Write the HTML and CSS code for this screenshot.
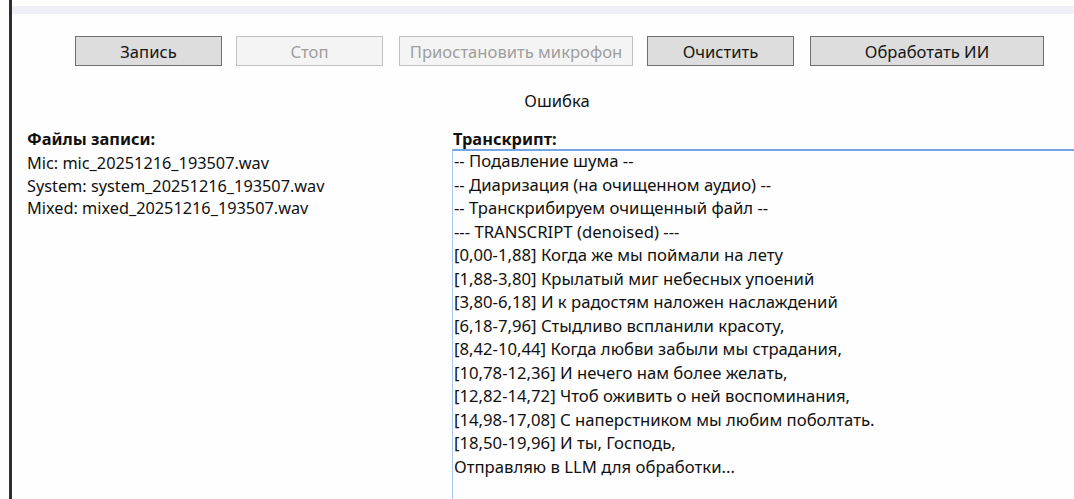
FILE: index.html
```html
<!DOCTYPE html>
<html lang="ru">
<head>
<meta charset="utf-8">
<title>Запись и транскрипция</title>
<link rel="stylesheet" href="styles.css">
</head>
<body>
<div class="window">
  <div class="topstrip"></div>
  <div class="toolbar">
    <button class="btn btn-narrow">Запись</button>
    <button class="btn btn-narrow" disabled>Стоп</button>
    <button class="btn btn-wide" disabled>Приостановить микрофон</button>
    <button class="btn btn-narrow">Очистить</button>
    <button class="btn btn-wide">Обработать ИИ</button>
  </div>
  <div class="status">Ошибка</div>
  <div class="content">
    <div class="files">
      <div class="label">Файлы записи:</div>
      <div class="file-list">
        <div>Mic: mic_20251216_193507.wav</div>
        <div>System: system_20251216_193507.wav</div>
        <div>Mixed: mixed_20251216_193507.wav</div>
      </div>
    </div>
    <div class="transcript">
      <div class="label">Транскрипт:</div>
      <div class="textbox">
        <div class="lines">
          <div>-- Подавление шума --</div>
          <div>-- Диаризация (на очищенном аудио) --</div>
          <div>-- Транскрибируем очищенный файл --</div>
          <div>--- TRANSCRIPT (denoised) ---</div>
          <div>[0,00-1,88] Когда же мы поймали на лету</div>
          <div>[1,88-3,80] Крылатый миг небесных упоений</div>
          <div>[3,80-6,18] И к радостям наложен наслаждений</div>
          <div>[6,18-7,96] Стыдливо вспланили красоту,</div>
          <div>[8,42-10,44] Когда любви забыли мы страдания,</div>
          <div>[10,78-12,36] И нечего нам более желать,</div>
          <div>[12,82-14,72] Чтоб оживить о ней воспоминания,</div>
          <div>[14,98-17,08] С наперстником мы любим поболтать.</div>
          <div>[18,50-19,96] И ты, Господь,</div>
          <div>Отправляю в LLM для обработки...</div>
        </div>
      </div>
    </div>
  </div>
</div>
</body>
</html>
```

FILE: styles.css
```css
html, body {
  margin: 0;
  padding: 0;
  background: #fefefe;
  overflow: hidden;
  height: 499px;
}

.window {
  display: flex;
  flex-direction: column;
  margin-left: 9px;
  border-left: 3px solid #2e2e2e;
  width: 1090px;
  height: 499px;
  overflow: hidden;
  font-family: "Noto Sans", "Open Sans", sans-serif;
  font-size: 16.6px;
  color: #111;
}

.topstrip {
  flex: none;
  margin-top: 6px;
  height: 8px;
  background: #eef0f6;
}

.toolbar {
  flex: none;
  display: flex;
  padding: 22px 0 0 63px;
}

.btn {
  height: 30px;
  margin: 0;
  padding: 0;
  font: inherit;
  font-size: 16.6px;
  color: #151515;
  background: #dddddd;
  border: 1px solid #707070;
}

.btn:disabled {
  color: #9e9e9e;
  background: #f4f4f4;
  border-color: #c2c2c2;
}

.btn-narrow { width: 147px; }
.btn-wide { width: 234px; }
.btn + .btn { margin-left: 14px; }
.btn + .btn-wide { margin-left: 16px; }

.status {
  flex: none;
  text-align: center;
  width: 1090px;
  padding-top: 25px;
  line-height: 20px;
}

.content {
  flex: 1;
  min-height: 0;
  display: flex;
  padding-top: 18px;
}

.files {
  width: 425px;
  padding-left: 15px;
  font-size: 16.3px;
}

.file-list {
  padding-top: 3px;
  line-height: 22.5px;
}

.label {
  font-size: 16.4px;
  font-weight: bold;
  line-height: 20px;
}

.transcript {
  flex: 1;
  display: flex;
  flex-direction: column;
}

.transcript .label {
  padding-left: 1px;
}

.textbox {
  flex: 1;
  border-top: 2px solid #73a6e3;
  border-left: 1px solid #a9c8ef;
  padding-left: 1px;
  font-size: 16.7px;
  line-height: 23.5px;
}

.lines {
  margin-top: -2px;
}
```
